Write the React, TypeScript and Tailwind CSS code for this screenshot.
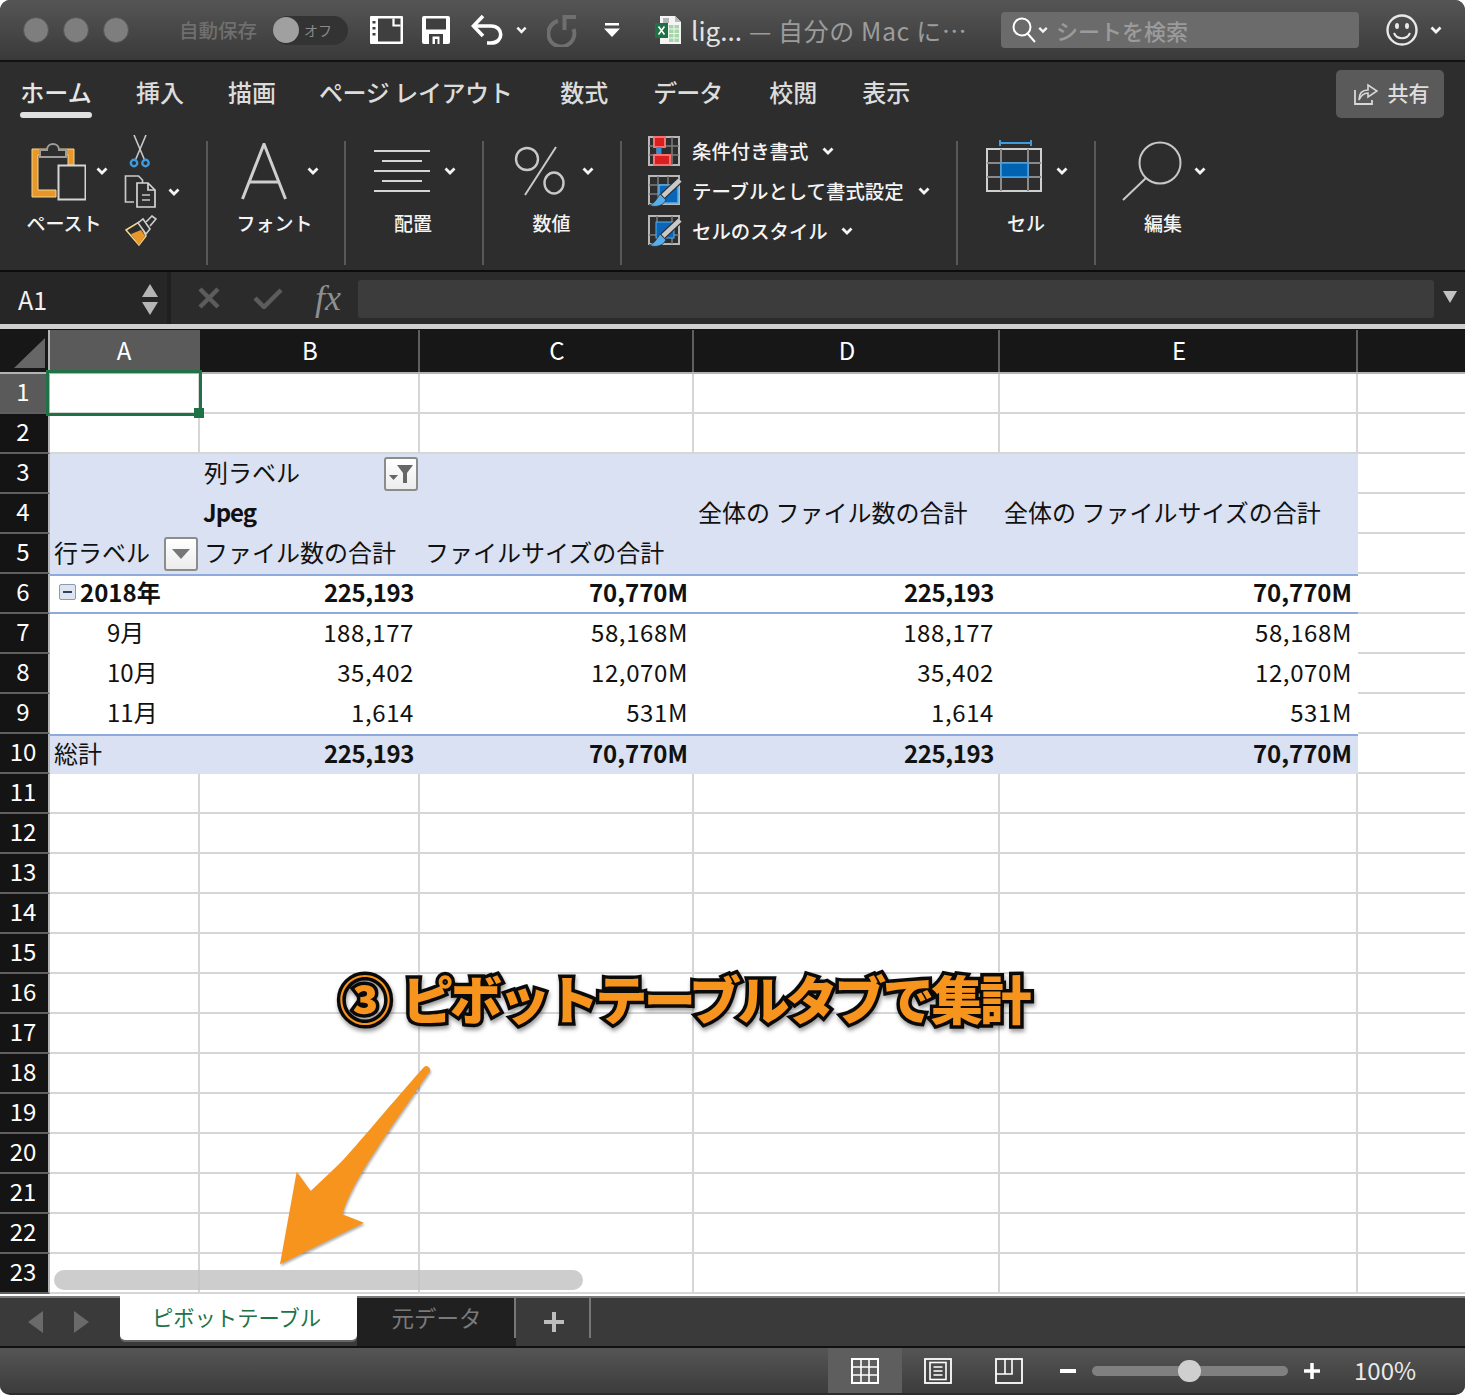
import React from "react";

const FONT = '"Noto Sans CJK JP", "Noto Sans", sans-serif';

function Chev({ c = "#f4f4f4", w = 12, className = "" }: { c?: string; w?: number; className?: string }) {
  return (
    <svg width={w} height={8} viewBox="0 0 12 8" className={"shrink-0 " + className}>
      <polyline points="1.5,1.5 6,6 10.5,1.5" fill="none" stroke={c} strokeWidth="2.8" />
    </svg>
  );
}

function Light() {
  return <div className="w-[26px] h-[26px] rounded-full bg-[#7e7e7e] border border-[#555]" />;
}

function SidebarDoc() {
  return (
    <svg width="33" height="28" viewBox="0 0 33 28" className="shrink-0">
      <path d="M1 0h31a1 1 0 0 1 1 1v26a1 1 0 0 1-1 1H1a1 1 0 0 1-1-1V1a1 1 0 0 1 1-1z" fill="#fff" />
      <rect x="8" y="2.5" width="22.5" height="23" fill="#3f3f3f" />
      <path d="M23.5 2.5v7h7" fill="none" stroke="#fff" strokeWidth="2.2" />
      <rect x="2.5" y="5" width="3" height="2.5" fill="#3f3f3f" />
      <rect x="2.5" y="11" width="3" height="2.5" fill="#3f3f3f" />
      <rect x="2.5" y="17" width="3" height="2.5" fill="#3f3f3f" />
    </svg>
  );
}

function Save() {
  return (
    <svg width="28" height="28" viewBox="0 0 28 28" className="shrink-0">
      <path d="M2 0h24a2 2 0 0 1 2 2v24a2 2 0 0 1-2 2H2a2 2 0 0 1-2-2V2a2 2 0 0 1 2-2z" fill="#fff" />
      <rect x="4" y="2.5" width="20" height="11" fill="#3f3f3f" />
      <rect x="7" y="18" width="14" height="10" fill="#3f3f3f" />
      <rect x="10.5" y="20.5" width="7" height="7.5" fill="#fff" />
      <rect x="13" y="23" width="2.5" height="5" fill="#3f3f3f" />
    </svg>
  );
}

function Undo() {
  return (
    <svg width="32" height="32" viewBox="0 0 32 32" className="shrink-0">
      <path d="M12 2 L2.5 12 L12 22" fill="none" stroke="#fff" strokeWidth="3.6" />
      <path d="M3 12 H20 C33 12 33 29 20 29 H16" fill="none" stroke="#fff" strokeWidth="3.6" />
    </svg>
  );
}

function Redo() {
  return (
    <svg width="30" height="34" viewBox="0 0 30 34" className="shrink-0">
      <path d="M11 8 A13 13 0 1 0 26.5 16" fill="none" stroke="#6f6f6f" strokeWidth="4" />
      <path d="M29 4 H17.5 V17" fill="none" stroke="#6f6f6f" strokeWidth="4" />
    </svg>
  );
}

function Customize() {
  return (
    <svg width="16" height="14" viewBox="0 0 16 14" className="shrink-0">
      <rect x="1" y="0" width="14" height="2.5" fill="#fff" />
      <polygon points="0,5.5 16,5.5 8,14" fill="#fff" />
    </svg>
  );
}

function ExcelIcon() {
  return (
    <svg width="27" height="28" viewBox="0 0 27 28" className="shrink-0">
      <path d="M5 0h15l6 6v22H5z" fill="#f4f4f4" />
      <path d="M20 0v6h6z" fill="#b9b9b9" />
      <rect x="8" y="2" width="6" height="5" fill="#b5b5b5" />
      <rect x="14" y="9" width="10" height="17" fill="#a5d6a7" />
      <path d="M14 13h10M14 17.5h10M14 22h10M19 9v17" stroke="#f4f4f4" strokeWidth="1" />
      <rect x="0" y="7" width="13" height="15" fill="#1e7145" />
      <path d="M3.5 10.5 L9.5 18.5 M9.5 10.5 L3.5 18.5" stroke="#fff" strokeWidth="1.6" />
    </svg>
  );
}

function Search() {
  return (
    <svg width="24" height="26" viewBox="0 0 24 26" className="shrink-0">
      <circle cx="10" cy="10" r="8.5" fill="none" stroke="#fff" strokeWidth="2" />
      <line x1="15.5" y1="16.5" x2="23" y2="25" stroke="#fff" strokeWidth="2" />
    </svg>
  );
}

function Smile() {
  return (
    <svg width="32" height="32" viewBox="0 0 32 32" className="shrink-0">
      <circle cx="16" cy="16" r="14.5" fill="none" stroke="#e8e8e8" strokeWidth="2.4" />
      <ellipse cx="11" cy="12" rx="2" ry="3" fill="#e8e8e8" />
      <ellipse cx="21" cy="12" rx="2" ry="3" fill="#e8e8e8" />
      <path d="M8 19 C11 26 21 26 24 19" fill="none" stroke="#e8e8e8" strokeWidth="2" />
    </svg>
  );
}

function ShareIcon() {
  return (
    <svg width="24" height="24" viewBox="0 0 24 24" className="shrink-0">
      <path d="M1 9v14h17v-4" fill="none" stroke="#d8d8d8" strokeWidth="1.8" />
      <path d="M5 19 C5 12 9 9 14 9 V4 L23 10 L14 16 V12 C10 12 7 14 5 19 Z" fill="none" stroke="#d8d8d8" strokeWidth="1.6" />
    </svg>
  );
}

function Paste() {
  return (
    <svg width="56" height="60" viewBox="0 0 56 60" className="shrink-0">
      <path d="M2 8H44V24H38V14H8V49H26V56H2Z" fill="#e8982a" stroke="#f6d68e" strokeWidth="1" />
      <path d="M10 16V9H17C17 1 29 1 29 9H36V16Z" fill="#2d2d2d" stroke="#9c9c9c" strokeWidth="2" />
      <rect x="28.5" y="24.5" width="27" height="34" fill="#2d2d2d" stroke="#d5d5d5" strokeWidth="2" />
    </svg>
  );
}

function Scissors() {
  return (
    <svg width="22" height="34" viewBox="0 0 22 34" className="block">
      <line x1="5" y1="0" x2="16" y2="26" stroke="#c9c9c9" strokeWidth="1.6" />
      <line x1="17" y1="0" x2="6" y2="26" stroke="#c9c9c9" strokeWidth="1.6" />
      <circle cx="5" cy="28" r="3.2" fill="none" stroke="#3d9be0" strokeWidth="2.4" />
      <circle cx="16.5" cy="28" r="3.2" fill="none" stroke="#3d9be0" strokeWidth="2.4" />
    </svg>
  );
}

function Copy() {
  return (
    <svg width="32" height="33" viewBox="0 0 32 33" className="block">
      <path d="M10 27H1.5V1h13l4 4v3" fill="none" stroke="#c9c9c9" strokeWidth="1.7" />
      <path d="M13 8h11l7 7v17H13z" fill="#2d2d2d" stroke="#d5d5d5" strokeWidth="1.7" />
      <path d="M24 8v7h7" fill="none" stroke="#d5d5d5" strokeWidth="1.7" />
      <path d="M18 20h8M18 25h8" stroke="#9f9f9f" strokeWidth="2" />
    </svg>
  );
}

function Brush() {
  return (
    <svg width="32" height="31" viewBox="0 0 32 31" className="block">
      <path d="M1 15 L14 7 L21 21 L14 30 Z" fill="#2d2d2d" stroke="#f2d58a" strokeWidth="1.5" />
      <path d="M6 19 L16 15 L20 21 L14 30 Z" fill="#e8982a" />
      <path d="M13 8 L18 4 L25 14 L21 19 Z" fill="#2d2d2d" stroke="#cfcfcf" strokeWidth="1.6" />
      <path d="M21 7 L27 1 L31 4 L25 11" fill="#2d2d2d" stroke="#cfcfcf" strokeWidth="1.6" />
    </svg>
  );
}

function BigA() {
  return (
    <svg width="46" height="57" viewBox="0 0 46 57" className="shrink-0">
      <path d="M1.5 56 L23 1 L44.5 56" fill="none" stroke="#cfcfcf" strokeWidth="3" />
      <line x1="8" y1="39" x2="38" y2="39" stroke="#cfcfcf" strokeWidth="3" />
    </svg>
  );
}

function Align() {
  return (
    <svg width="56" height="44" viewBox="0 0 56 44" className="shrink-0">
      <path d="M0 2h56M8 12h40M0 22h56M8 32h40M0 42h56" stroke="#d5d5d5" strokeWidth="2" />
    </svg>
  );
}

function Percent() {
  return (
    <svg width="52" height="50" viewBox="0 0 52 50" className="shrink-0">
      <circle cx="13" cy="13" r="11" fill="none" stroke="#c8c8c8" strokeWidth="2.4" />
      <line x1="11" y1="49" x2="42" y2="1" stroke="#c8c8c8" strokeWidth="2" />
      <ellipse cx="40" cy="37" rx="9.5" ry="10.5" fill="none" stroke="#c8c8c8" strokeWidth="2.4" />
    </svg>
  );
}

function MiniBrush() {
  return (
    <g>
      <path d="M32 5 L15 21" stroke="#2d2d2d" strokeWidth="7" />
      <path d="M32 5 L15 21" stroke="#c9c9c9" strokeWidth="4.5" />
      <path d="M12 19 L18 25 C15 31 7 33 1 30 C6 29 8 25 12 19 Z" fill="#5aaee8" stroke="#2d2d2d" strokeWidth="0.8" />
    </g>
  );
}

function CondFmt() {
  return (
    <svg width="32" height="30" viewBox="0 0 32 30" className="shrink-0">
      <rect x="1" y="1" width="30" height="28" fill="none" stroke="#b8b8b8" strokeWidth="2" />
      <path d="M1 10h30M1 19h30M9 1v28M24 1v28" stroke="#7d7d7d" strokeWidth="1.5" />
      <rect x="6" y="1" width="11" height="10" fill="#d91f1f" stroke="#f87171" strokeWidth="2" />
      <rect x="8.5" y="11" width="5" height="9" fill="#2f8fdc" />
      <rect x="6" y="19" width="16" height="10" fill="#d91f1f" stroke="#f87171" strokeWidth="2" />
    </svg>
  );
}

function TableFmt() {
  return (
    <svg width="34" height="33" viewBox="0 0 34 33" className="shrink-0">
      <rect x="1" y="1" width="30" height="28" fill="none" stroke="#b8b8b8" strokeWidth="2" />
      <path d="M1 10h30M1 19h30M10 1v28M20 1v28" stroke="#7d7d7d" strokeWidth="1.5" />
      <rect x="11" y="10" width="19" height="18" fill="#0a66b8" stroke="#5aaee8" strokeWidth="1.5" />
      <MiniBrush />
    </svg>
  );
}

function CellFmt() {
  return (
    <svg width="34" height="33" viewBox="0 0 34 33" className="shrink-0">
      <rect x="1" y="1" width="30" height="28" fill="none" stroke="#b8b8b8" strokeWidth="2" />
      <path d="M1 20h30M9 1v28M24 1v28" stroke="#7d7d7d" strokeWidth="1.5" />
      <rect x="8" y="7" width="18" height="16" fill="#0a66b8" stroke="#5aaee8" strokeWidth="1" />
      <MiniBrush />
    </svg>
  );
}

function CellsIcon() {
  return (
    <svg width="56" height="52" viewBox="0 0 56 52" className="shrink-0 mb-[10px]">
      <path d="M14 0v6M45 0v6M14 3h31" stroke="#3d9be0" strokeWidth="2" />
      <rect x="1" y="9" width="54" height="42" fill="none" stroke="#cfcfcf" strokeWidth="2" />
      <path d="M1 23h54M1 37h54M15 9v42M42 9v42" stroke="#8a8a8a" strokeWidth="2" />
      <rect x="15" y="23" width="27" height="14" fill="#0063b1" stroke="#4aa3e8" strokeWidth="1.5" />
    </svg>
  );
}

function Magnifier() {
  return (
    <svg width="62" height="60" viewBox="0 0 62 60" className="shrink-0">
      <circle cx="38" cy="22" r="20.5" fill="none" stroke="#c8c8c8" strokeWidth="2" />
      <line x1="24" y1="37" x2="1" y2="59" stroke="#c8c8c8" strokeWidth="2" />
    </svg>
  );
}

function Divider() {
  return <div className="w-[2px] h-[124px] mt-[10px] bg-[#585858] shrink-0" />;
}

function Group({ w, pl, label, children, labelPr = 0 }: { w: number; pl: number; label: string; children: React.ReactNode; labelPr?: number }) {
  return (
    <div className="flex flex-col pt-[4px] shrink-0" style={{ width: w }}>
      <div className="h-[72px] flex items-center" style={{ paddingLeft: pl }}>
        {children}
      </div>
      <div className="h-[32px] flex items-center justify-center text-[19px] font-medium text-[#f4f4f4]" style={{ paddingRight: labelPr }}>
        {label}
      </div>
    </div>
  );
}

function StyleRow({ icon, label, gap }: { icon: React.ReactNode; label: string; gap: number }) {
  return (
    <div className="h-10 flex items-center text-[19.4px] font-medium text-[#f4f4f4] whitespace-nowrap">
      <div className="w-[44px] shrink-0">{icon}</div>
      <span>{label}</span>
      <span style={{ width: gap }} className="shrink-0" />
      <Chev />
    </div>
  );
}

function FilterBtn({ funnel }: { funnel?: boolean }) {
  return (
    <div className="w-[34px] h-[34px] mt-[4px] shrink-0 rounded-[3px] border-2 border-[#8c8c8c] bg-gradient-to-b from-white to-[#ececec] flex items-center justify-center">
      {funnel ? (
        <svg width="26" height="20" viewBox="0 0 26 20">
          <polygon points="1,11 10,11 5.5,16" fill="#666" />
          <polygon points="9,1 25,1 19,9 19,19 15,19 15,9" fill="#666" />
        </svg>
      ) : (
        <svg width="18" height="10" viewBox="0 0 18 10">
          <polygon points="0,0 18,0 9,10" fill="#777" />
        </svg>
      )}
    </div>
  );
}

type Cell = { t?: React.ReactNode; r?: boolean; b?: boolean; pl?: number; track?: string };

const B = "bg-[#d9e1f2]";
const gridRow = "grid grid-cols-[150px_220px_274px_306px_358px_1fr] flex-1 min-w-0";

function RowHead({ n, active }: { n: number; active?: boolean }) {
  return (
    <div
      className={
        "w-[50px] shrink-0 h-full border-r-2 border-r-[#b4b4b4] border-b-2 border-b-[#5f5f5f] pr-[2px] pb-[5px] flex items-center justify-center text-[24px] text-white " +
        (active ? "bg-[#5a5a5a]" : "bg-[#141414]")
      }
    >
      {n}
    </div>
  );
}

function PlainRow({ n, active }: { n: number; active?: boolean }) {
  return (
    <div className="h-10 flex">
      <RowHead n={n} active={active} />
      <div className={gridRow}>
        {[0, 1, 2, 3, 4].map((i) => (
          <div key={i} className="border-r-2 border-b-2 border-[#d6d6d6]" />
        ))}
        <div className="border-b-2 border-[#d6d6d6]" />
      </div>
    </div>
  );
}

function PivotRow({ n, cells, fill, top, bottom }: { n: number; cells: Cell[]; fill?: boolean; top?: boolean; bottom?: boolean }) {
  return (
    <div className="h-10 flex">
      <RowHead n={n} />
      <div className={gridRow}>
        {cells.map((c, i) => (
          <div
            key={i}
            className={
              "h-10 flex items-center pb-[4px] text-[24px] text-[#111] whitespace-nowrap overflow-visible " +
              (fill ? B + " " : "bg-white ") +
              (c.r ? "justify-end pr-[6px] " : "pl-[4px] ") +
              (c.b ? "font-bold " : "") +
              (c.r && !c.b ? "tracking-[0.6px] " : "") +
              (top ? "border-t-2 border-t-[#8ea9db] " : "") +
              (bottom ? "border-b-2 border-b-[#8ea9db] " : "")
            }
            style={{ paddingLeft: c.pl, letterSpacing: c.track }}
          >
            {c.t}
          </div>
        ))}
        <div className="border-b-2 border-[#d6d6d6] bg-white" />
      </div>
    </div>
  );
}

function Collapse() {
  return (
    <div className="w-[17px] h-[16px] mr-[4px] shrink-0 rounded-[2px] border border-[#8c9ab5] bg-[#dfe5ef] flex items-center justify-center">
      <div className="w-[9px] h-[2px] bg-[#2f3f66]" />
    </div>
  );
}

function GridView() {
  return (
    <svg width="28" height="26" viewBox="0 0 28 26">
      <rect x="1" y="1" width="26" height="24" fill="none" stroke="#fff" strokeWidth="2" />
      <path d="M1 9h26M1 17h26M10 1v24M18 1v24" stroke="#fff" strokeWidth="1.6" />
    </svg>
  );
}
function PageView() {
  return (
    <svg width="28" height="26" viewBox="0 0 28 26">
      <rect x="1" y="1" width="26" height="24" fill="none" stroke="#fff" strokeWidth="1.8" />
      <rect x="6" y="4.5" width="16" height="17" fill="none" stroke="#fff" strokeWidth="1.6" />
      <path d="M9.5 9h9M9.5 13h9M9.5 17h9" stroke="#fff" strokeWidth="1.6" />
    </svg>
  );
}
function BreakView() {
  return (
    <svg width="28" height="26" viewBox="0 0 28 26">
      <rect x="1" y="1" width="26" height="24" fill="none" stroke="#fff" strokeWidth="1.8" />
      <path d="M1 16h16V1M10 1v15" fill="none" stroke="#fff" strokeWidth="1.6" />
    </svg>
  );
}

const GT = "-0.4px";

export default function App() {
  return (
    <div className="relative w-[1466px] h-[1396px] bg-white overflow-hidden" style={{ fontFamily: FONT }}>
      <div className="w-[1465px] h-[1395px] flex flex-col rounded-[10px] overflow-hidden bg-[#2d2d2d]">
        {/* Title bar */}
        <div className="h-[62px] shrink-0 border-b-2 border-b-[#111] bg-gradient-to-b from-[#555555] to-[#3a3a3a] flex items-center whitespace-nowrap">
          <div className="flex gap-[14px] pl-[23px] w-[179px] shrink-0">
            <Light />
            <Light />
            <Light />
          </div>
          <span className="text-[19.5px] font-medium text-[#6f6f6f] w-[94px] shrink-0">自動保存</span>
          <div className="w-[75px] h-[29px] shrink-0 rounded-full bg-[#333] flex items-center">
            <div className="w-[26px] h-[26px] rounded-full bg-[#a0a0a0]" />
            <span className="text-[14px] text-[#8a8a8a] ml-[5px]">オフ</span>
          </div>
          <div className="ml-[22px] flex items-center">
            <SidebarDoc />
            <div className="w-[19px]" />
            <Save />
            <div className="w-[21px]" />
            <Undo />
            <div className="w-[13px]" />
            <Chev w={11} />
            <div className="w-[20px]" />
            <Redo />
            <div className="w-[27px]" />
            <Customize />
            <div className="w-[35px]" />
            <ExcelIcon />
          </div>
          <span className="ml-[9px] text-[26px] text-[#e2e2e2] leading-none">lig...</span>
          <span className="ml-[7px] text-[25px] tracking-[0.6px] text-[#9c9c9c] w-[252px] shrink-0 leading-none">— 自分の Mac に…</span>
          <div className="w-[358px] h-[36px] shrink-0 rounded-[4px] bg-[#6b6b6b] flex items-center pl-[11px]">
            <Search />
            <Chev w={10} className="ml-[2px]" />
            <span className="ml-[8px] text-[22px] font-medium text-[#9b9b9b]">シートを検索</span>
          </div>
          <div className="ml-[27px]">
            <Smile />
          </div>
          <Chev className="ml-[12px]" />
        </div>

        {/* Ribbon */}
        <div className="h-[210px] shrink-0 bg-[#2d2d2d] border-b-2 border-b-[#0c0c0c] flex flex-col">
          <div className="h-[69px] shrink-0 flex items-start whitespace-nowrap text-[24px] font-medium text-[#dcdcdc]">
            <div className="flex items-center h-[60px] pl-[20px]">
              <div className="relative w-[72px] text-center mr-[44px] text-[#e6e6e6]">
                ホーム
                <div className="absolute left-0 right-0 top-[38px] h-[6px] rounded-full bg-[#e0e0e0]" />
              </div>
              <span className="mr-[44px]">挿入</span>
              <span className="mr-[43px]">描画</span>
              <span className="mr-[48px] tracking-[-0.4px]">ページ レイアウト</span>
              <span className="mr-[45px]">数式</span>
              <span className="mr-[47px] tracking-[-1px]">データ</span>
              <span className="mr-[45px]">校閲</span>
              <span>表示</span>
            </div>
            <div className="ml-auto mr-[21px] mt-[8px] w-[108px] h-[48px] pl-[3px] pb-[3px] rounded-[5px] bg-[#5a5a5a] flex items-center justify-center gap-[10px] text-[21px] font-medium text-[#dedede]">
              <ShareIcon />
              <span>共有</span>
            </div>
          </div>
          <div className="flex flex-1">
            {/* Clipboard */}
            <div className="w-[206px] shrink-0 flex pt-[4px]">
              <div className="w-[124px] shrink-0 flex flex-col">
                <div className="h-[72px] flex items-center pl-[30px]">
                  <Paste />
                  <Chev className="ml-[10px]" />
                </div>
                <div className="h-[32px] flex items-center justify-center pl-[4px] text-[19px] font-medium text-[#f4f4f4]">ペースト</div>
              </div>
              <div className="flex flex-col">
                <div className="ml-[5px]">
                  <Scissors />
                </div>
                <div className="flex items-center mt-[6px]">
                  <Copy />
                  <Chev className="ml-[12px]" />
                </div>
                <div className="mt-[7px] ml-[1px]">
                  <Brush />
                </div>
              </div>
            </div>
            <Divider />
            <Group w={136} pl={33} label="フォント" labelPr={3}>
              <BigA />
              <Chev className="ml-[20px]" />
            </Group>
            <Divider />
            <Group w={136} pl={28} label="配置" labelPr={2}>
              <Align />
              <Chev className="ml-[14px]" />
            </Group>
            <Divider />
            <Group w={136} pl={30} label="数値" labelPr={1}>
              <Percent />
              <Chev className="ml-[16px]" />
            </Group>
            <Divider />
            <div className="w-[334px] shrink-0 pl-[26px]">
              <StyleRow icon={<CondFmt />} label="条件付き書式" gap={14} />
              <StyleRow icon={<TableFmt />} label="テーブルとして書式設定" gap={14} />
              <StyleRow icon={<CellFmt />} label="セルのスタイル" gap={13} />
            </div>
            <Divider />
            <Group w={136} pl={28} label="セル">
              <CellsIcon />
              <Chev className="ml-[14px]" />
            </Group>
            <Divider />
            <Group w={136} pl={26} label="編集" labelPr={2}>
              <Magnifier />
              <Chev className="ml-[10px]" />
            </Group>
          </div>
        </div>

        {/* Formula bar */}
        <div className="h-[52px] shrink-0 flex bg-[#2b2b2b]">
          <div className="w-[167px] shrink-0 bg-[#262626] flex items-center pl-[18px] pr-[9px] text-[25px] text-[#f2f2f2]">
            <span className="flex-1 mt-[3px]">A1</span>
            <div className="flex flex-col gap-[5px] mt-[2px]">
              <svg width="16" height="13" viewBox="0 0 16 13"><polygon points="8,0 16,13 0,13" fill="#b5b5b5" /></svg>
              <svg width="16" height="13" viewBox="0 0 16 13"><polygon points="0,0 16,0 8,13" fill="#b5b5b5" /></svg>
            </div>
          </div>
          <div className="w-[4px] shrink-0 bg-[#1f1f1f]" />
          <div className="w-[187px] shrink-0 flex items-center">
            <svg width="22" height="22" viewBox="0 0 22 22" className="ml-[27px]">
              <path d="M2 2 L20 20 M20 2 L2 20" stroke="#5c5c5c" strokeWidth="4.5" />
            </svg>
            <svg width="30" height="22" viewBox="0 0 30 22" className="ml-[33px]">
              <path d="M2 11 L11 20 L28 3" fill="none" stroke="#5c5c5c" strokeWidth="4.5" />
            </svg>
            <span className="ml-[32px] text-[36px] italic text-[#8f8f8f] leading-none" style={{ fontFamily: '"Liberation Serif", serif' }}>fx</span>
          </div>
          <div className="w-[1076px] h-[38px] mt-[8px] shrink-0 bg-[#3c3c3c] rounded-[3px]" />
          <div className="flex-1 flex items-center justify-center pb-[3px]">
            <svg width="14" height="12" viewBox="0 0 14 12"><polygon points="0,0 14,0 7,12" fill="#c2c2c2" /></svg>
          </div>
        </div>
        <div className="h-[5px] shrink-0 bg-[#cfcfcf]" />
        <div className="h-[1px] shrink-0 bg-[#111]" />

        {/* Column header */}
        <div className="h-[44px] shrink-0 flex border-b-2 border-b-[#b4b4b4] bg-[#171717] text-[24px] text-white">
          <div className="w-[50px] shrink-0 border-r-2 border-r-[#b4b4b4] flex items-end justify-end pr-[3px] pb-[4px]">
            <svg width="31" height="30" viewBox="0 0 31 30"><polygon points="31,0 31,30 0,30" fill="#666" /></svg>
          </div>
          <div className={gridRow}>
            <div className="bg-[#5a5a5a] flex items-center justify-center pr-[2px] pb-[2px]">A</div>
            <div className="border-r-2 border-r-[#5f5f5f] flex items-center justify-center pl-[2px] pb-[2px]">B</div>
            <div className="border-r-2 border-r-[#5f5f5f] flex items-center justify-center pl-[2px] pb-[2px]">C</div>
            <div className="border-r-2 border-r-[#5f5f5f] flex items-center justify-center pl-[2px] pb-[2px]">D</div>
            <div className="border-r-2 border-r-[#5f5f5f] flex items-center justify-center pl-[2px] pb-[2px]">E</div>
            <div />
          </div>
        </div>

        {/* Rows */}
        <div className="h-[922px] shrink-0 bg-white">
          <PlainRow n={1} active />
          <PlainRow n={2} />
          <PivotRow
            n={3}
            fill
            cells={[
              {},
              { t: <div className="flex items-center justify-between w-full pr-[2px]"><span>列ラベル</span><FilterBtn funnel /></div> },
              {},
              {},
              {},
            ]}
          />
          <PivotRow
            n={4}
            fill
            cells={[
              {},
              { t: "Jpeg", b: true, pl: 3, track: "-1px" },
              {},
              { t: "全体の ファイル数の合計" },
              { t: "全体の ファイルサイズの合計" },
            ]}
          />
          <PivotRow
            n={5}
            fill
            cells={[
              { t: <div className="flex items-center justify-between w-full pr-[2px]"><span>行ラベル</span><FilterBtn /></div> },
              { t: "ファイル数の合計" },
              { t: "ファイルサイズの合計", pl: 5 },
              {},
              {},
            ]}
          />
          <PivotRow
            n={6}
            top
            bottom
            cells={[
              { t: <><Collapse /><span>2018年</span></>, b: true, pl: 9 },
              { t: "225,193", r: true, b: true, track: GT },
              { t: "70,770M", r: true, b: true },
              { t: "225,193", r: true, b: true, track: GT },
              { t: "70,770M", r: true, b: true },
            ]}
          />
          <PivotRow n={7} cells={[{ t: "9月", pl: 57 }, { t: "188,177", r: true }, { t: "58,168M", r: true }, { t: "188,177", r: true }, { t: "58,168M", r: true }]} />
          <PivotRow n={8} cells={[{ t: "10月", pl: 57 }, { t: "35,402", r: true }, { t: "12,070M", r: true }, { t: "35,402", r: true }, { t: "12,070M", r: true }]} />
          <PivotRow n={9} cells={[{ t: "11月", pl: 57 }, { t: "1,614", r: true }, { t: "531M", r: true }, { t: "1,614", r: true }, { t: "531M", r: true }]} />
          <PivotRow
            n={10}
            fill
            top
            cells={[
              { t: "総計" },
              { t: "225,193", r: true, b: true, track: GT },
              { t: "70,770M", r: true, b: true },
              { t: "225,193", r: true, b: true, track: GT },
              { t: "70,770M", r: true, b: true },
            ]}
          />
          {[11, 12, 13, 14, 15, 16, 17, 18, 19, 20, 21, 22, 23].map((n) => (
            <PlainRow key={n} n={n} />
          ))}
        </div>

        {/* Sheet tabs */}
        <div className="h-[52px] shrink-0 flex border-b-2 border-b-[#111] bg-[#3a3a3a] whitespace-nowrap">
          <div className="w-[120px] shrink-0 flex items-center pl-[28px] gap-[31px] border-t-2 border-t-[#7a7a7a]">
            <svg width="15" height="22" viewBox="0 0 15 22"><polygon points="15,0 15,22 0,11" fill="#6a6a6a" /></svg>
            <svg width="15" height="22" viewBox="0 0 15 22"><polygon points="0,0 0,22 15,11" fill="#6a6a6a" /></svg>
          </div>
          <div className="w-[237px] h-[44px] shrink-0 bg-white rounded-b-[5px] shadow-[0_2px_0_#666] flex items-center justify-center pb-[3px] pr-[4px] text-[21.3px] text-[#217346]">
            ピボットテーブル
          </div>
          <div className="w-[159px] shrink-0 bg-[#202020] border-t-2 border-t-[#7a7a7a] h-full flex items-start">
            <div className="flex-1 text-center pt-[3px] pl-[2px] text-[22.5px] text-[#7a7a7a]">元データ</div>
            <div className="w-[2px] h-[40px] bg-[#777]" />
          </div>
          <div className="w-[75px] shrink-0 h-full border-t-2 border-t-[#7a7a7a] flex items-start">
            <div className="flex-1 h-full flex items-center justify-center pl-[3px]">
              <svg width="20" height="20" viewBox="0 0 20 20"><path d="M10 0v20M0 10h20" stroke="#bdbdbd" strokeWidth="4" /></svg>
            </div>
            <div className="w-[2px] h-[40px] bg-[#777]" />
          </div>
          <div className="flex-1 border-t-2 border-t-[#7a7a7a]" />
        </div>

        {/* Status bar */}
        <div className="h-[45px] shrink-0 flex items-stretch bg-gradient-to-b from-[#555] to-[#3c3c3c]">
          <div className="w-[828px] shrink-0" />
          <div className="w-[74px] shrink-0 bg-[#5e5e5e] flex items-center justify-center">
            <GridView />
          </div>
          <div className="w-[71px] shrink-0 flex items-center justify-center">
            <PageView />
          </div>
          <div className="w-[71px] shrink-0 flex items-center justify-center">
            <BreakView />
          </div>
          <div className="flex items-center ml-[16px]">
            <div className="w-[16px] h-[4px] bg-white" />
            <div className="relative w-[196px] h-[10px] ml-[16px] rounded-full bg-[#808080]">
              <div className="absolute left-[86px] top-[-6px] w-[23px] h-[22px] rounded-full bg-[#cfcfcf]" />
            </div>
            <svg width="16" height="16" viewBox="0 0 16 16" className="ml-[16px]"><path d="M8 0v16M0 8h16" stroke="#fff" strokeWidth="3.5" /></svg>
            <span className="ml-[34px] pb-[2px] text-[24px] text-[#eaeaea]">100%</span>
          </div>
        </div>
      </div>

      {/* Selection */}
      <div className="absolute left-[46px] top-[370px] w-[156px] h-[46px] border-[3px] border-[#1f7246]" />
      <div className="absolute left-[194px] top-[408px] w-[10px] h-[10px] bg-[#1f7246]" />

      {/* Scrollbar */}
      <div className="absolute left-[54px] top-[1270px] w-[529px] h-[20px] rounded-full bg-[#c4c4c4]/85" />

      {/* Annotation */}
      <div
        className="absolute left-[339px] top-[958px] text-[52px] font-black text-[#f7941d] whitespace-nowrap tracking-[-3.6px] leading-[80px] [-webkit-text-stroke:7px_#0a0a0a] [paint-order:stroke_fill] [filter:drop-shadow(1px_3px_2px_rgba(0,0,0,0.4))]"
      >
        <span className="mr-[6px]">③ </span>ピボットテーブルタブで集計
      </div>

      {/* Arrow */}
      <svg width="190" height="225" viewBox="0 0 190 225" className="absolute left-[260px] top-[1055px] [filter:drop-shadow(1px_2px_1px_rgba(0,0,0,0.3))]">
        <path
          d="M164 12 C130 50 85 105 76 112 L50.7 136 L36.7 116.7 L20 209.3 L104 167.7 L82.3 159.3 C92 125 130 75 168.5 18 A3.5 3.5 0 0 0 164 12 Z"
          fill="#f7941d"
        />
      </svg>
    </div>
  );
}
